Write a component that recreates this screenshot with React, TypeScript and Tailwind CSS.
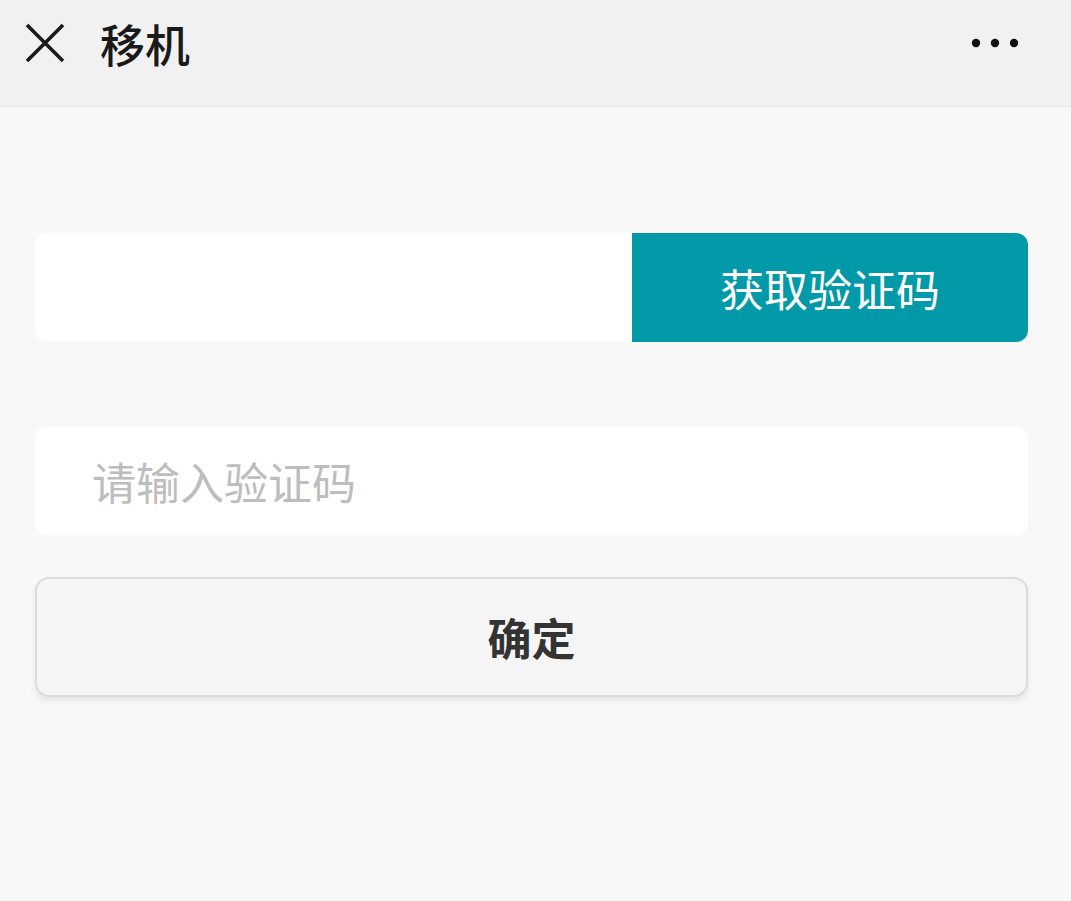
import * as React from 'react';

const FONT = '"Noto Sans CJK SC", "Noto Sans", sans-serif';

function CloseIcon() {
  return (
    <svg width="42" height="42" viewBox="0 0 42 42" fill="none">
      <path d="M3 3 L39 39 M39 3 L3 39" stroke="#1a1a1a" strokeWidth="3.6" />
    </svg>
  );
}

function MoreIcon() {
  return (
    <svg width="48" height="10" viewBox="0 0 48 10">
      <circle cx="5" cy="5" r="4.2" fill="#111" />
      <circle cx="24" cy="5" r="4.2" fill="#111" />
      <circle cx="43" cy="5" r="4.2" fill="#111" />
    </svg>
  );
}

export default function App() {
  return (
    <div className="flex min-h-[901px] w-full flex-col bg-[#f8f8f8]" style={{ fontFamily: FONT }}>
      <header className="flex h-[107px] items-center border-b border-[#ececec] bg-[#f1f1f1] pb-[20px] pl-[24px] pr-[52px]">
        <CloseIcon />
        <h1 className="ml-[34px] text-[45px] font-medium leading-none text-[#1a1a1a]">移机</h1>
        <div className="ml-auto">
          <MoreIcon />
        </div>
      </header>

      <main className="flex flex-col pl-[35px] pr-[43px] pt-[126px]">
        <div className="flex h-[109px] overflow-hidden rounded-[12px] bg-white">
          <div className="flex-1" />
          <button className="flex w-[396px] items-center justify-center bg-[#0299a9] text-[44px] leading-none text-white">
            获取验证码
          </button>
        </div>

        <div className="mt-[84px] flex h-[109px] items-center rounded-[12px] bg-white pl-[57px]">
          <span className="text-[44px] leading-none text-[#bdbdbd]">请输入验证码</span>
        </div>

        <button className="mt-[42px] flex h-[120px] items-center justify-center rounded-[14px] border-2 border-[#dcdcdc] bg-[#f5f5f5] text-[44px] font-bold leading-none text-[#333333] shadow-[0_4px_6px_rgba(0,0,0,0.08)]">
          确定
        </button>
      </main>
    </div>
  );
}
